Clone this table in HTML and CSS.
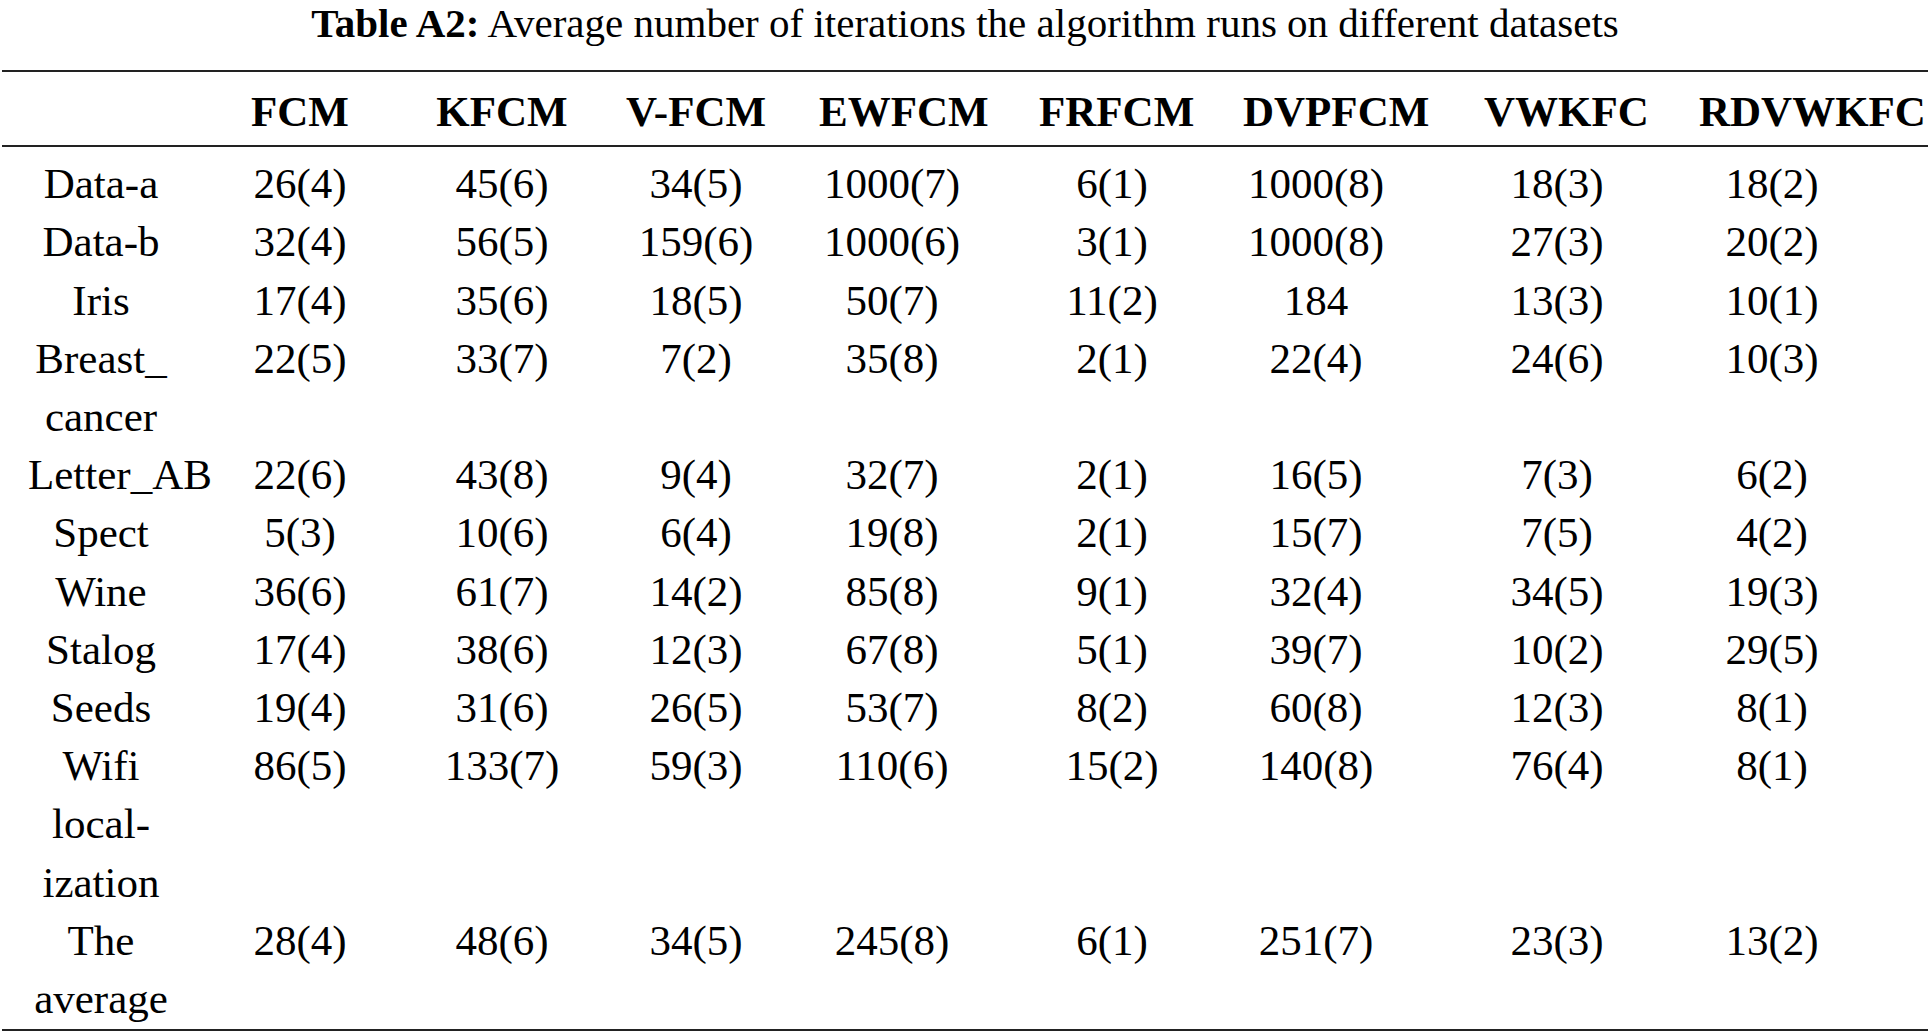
FILE: index.html
```
<!DOCTYPE html>
<html lang="en">
<head>
    <meta charset="UTF-8">
    <title>Table A2: Average number of iterations</title>
    <link rel="stylesheet" href="styles.css">
</head>
<body>
    <table class="results">
        <caption><strong>Table A2:</strong> Average number of iterations the algorithm runs on different datasets</caption>
        <colgroup>
            <col class="c-name"><col class="c-fcm"><col class="c-kfcm"><col class="c-vfcm"><col class="c-ewfcm">
            <col class="c-frfcm"><col class="c-dvpfcm"><col class="c-vwkfc"><col class="c-rdvwkfc">
        </colgroup>
        <thead>
            <tr>
                <th></th>
                <th>FCM</th>
                <th>KFCM</th>
                <th>V-FCM</th>
                <th>EWFCM</th>
                <th>FRFCM</th>
                <th>DVPFCM</th>
                <th>VWKFC</th>
                <th>RDVWKFC</th>
            </tr>
        </thead>
        <tbody>
            <tr><td>Data-a</td><td>26(4)</td><td>45(6)</td><td>34(5)</td><td>1000(7)</td><td>6(1)</td><td>1000(8)</td><td>18(3)</td><td>18(2)</td></tr>
            <tr><td>Data-b</td><td>32(4)</td><td>56(5)</td><td>159(6)</td><td>1000(6)</td><td>3(1)</td><td>1000(8)</td><td>27(3)</td><td>20(2)</td></tr>
            <tr><td>Iris</td><td>17(4)</td><td>35(6)</td><td>18(5)</td><td>50(7)</td><td>11(2)</td><td>184</td><td>13(3)</td><td>10(1)</td></tr>
            <tr><td>Breast_<wbr>cancer</td><td>22(5)</td><td>33(7)</td><td>7(2)</td><td>35(8)</td><td>2(1)</td><td>22(4)</td><td>24(6)</td><td>10(3)</td></tr>
            <tr><td>Letter_AB</td><td>22(6)</td><td>43(8)</td><td>9(4)</td><td>32(7)</td><td>2(1)</td><td>16(5)</td><td>7(3)</td><td>6(2)</td></tr>
            <tr><td>Spect</td><td>5(3)</td><td>10(6)</td><td>6(4)</td><td>19(8)</td><td>2(1)</td><td>15(7)</td><td>7(5)</td><td>4(2)</td></tr>
            <tr><td>Wine</td><td>36(6)</td><td>61(7)</td><td>14(2)</td><td>85(8)</td><td>9(1)</td><td>32(4)</td><td>34(5)</td><td>19(3)</td></tr>
            <tr><td>Stalog</td><td>17(4)</td><td>38(6)</td><td>12(3)</td><td>67(8)</td><td>5(1)</td><td>39(7)</td><td>10(2)</td><td>29(5)</td></tr>
            <tr><td>Seeds</td><td>19(4)</td><td>31(6)</td><td>26(5)</td><td>53(7)</td><td>8(2)</td><td>60(8)</td><td>12(3)</td><td>8(1)</td></tr>
            <tr><td>Wifi local&shy;ization</td><td>86(5)</td><td>133(7)</td><td>59(3)</td><td>110(6)</td><td>15(2)</td><td>140(8)</td><td>76(4)</td><td>8(1)</td></tr>
            <tr><td>The average</td><td>28(4)</td><td>48(6)</td><td>34(5)</td><td>245(8)</td><td>6(1)</td><td>251(7)</td><td>23(3)</td><td>13(2)</td></tr>
        </tbody>
    </table>
</body>
</html>
```

FILE: styles.css
```
body { margin: 0; background: #fff; color: #000; font-family: "Liberation Serif", "Times New Roman", serif; }

.results { width: 1926px; margin: 0 auto; table-layout: fixed; border-collapse: separate; border-spacing: 0; font-size: 43px; }
.results caption { font-size: 41px; line-height: 46px; padding-bottom: 24px; text-align: center; white-space: nowrap; }

.c-name { width: 195px; }
.c-fcm { width: 201px; }
.c-kfcm { width: 201px; }
.c-vfcm { width: 195px; }
.c-ewfcm { width: 208px; }
.c-frfcm { width: 212px; }
.c-dvpfcm { width: 223px; }
.c-vwkfc { width: 228px; }
.c-rdvwkfc { width: 263px; }

.results th, .results td { text-align: center; vertical-align: top; line-height: 58.2px; }
.results th { font-weight: bold; padding-top: 11px; padding-bottom: 4px; border-top: 2px solid #222; border-bottom: 2px solid #222; white-space: nowrap; }
.results td { padding-top: 0; padding-bottom: 0; }
.results tbody tr:first-child td { padding-top: 8px; }
.results tbody tr:last-child td { padding-bottom: 1px; border-bottom: 2px solid #222; }

/* each column keeps a 146px text box; the side gaps differ */
.results tr > :nth-child(1) { padding-left: 26px; padding-right: 23px; }
.results tr > :nth-child(2) { padding-left: 30px; padding-right: 25px; }
.results tr > :nth-child(3) { padding-left: 31px; padding-right: 24px; }
.results tr > :nth-child(4) { padding-left: 24px; padding-right: 25px; }
.results tr > :nth-child(5) { padding-left: 25px; padding-right: 37px; }
.results tr > :nth-child(6) { padding-left: 37px; padding-right: 29px; }
.results tr > :nth-child(7) { padding-left: 29px; padding-right: 48px; }
.results tr > :nth-child(8) { padding-left: 47px; padding-right: 35px; }
.results tr > :nth-child(9) { padding-left: 34px; padding-right: 83px; }
```
